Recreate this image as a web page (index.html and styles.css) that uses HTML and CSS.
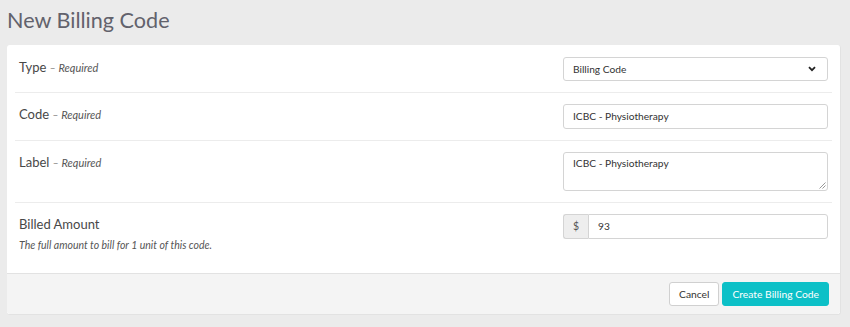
FILE: index.html
```html
<!DOCTYPE html>
<html lang="en">
<head>
    <meta charset="UTF-8">
    <meta name="viewport" content="width=device-width, initial-scale=1.0">
    <title>New Billing Code</title>
    <link rel="stylesheet" href="styles.css">
</head>
<body>

    <h1 class="page-title">New Billing Code</h1>

    <form class="card">
        <div class="card-body">
            <div class="form-row first">
                <div class="field-label">
                    <label>Type</label> <span class="req">&ndash; Required</span>
                </div>
                <div class="field-input">
                    <div class="select">
                        <span>Billing Code</span>
                        <svg class="chevron" width="8" height="6" viewBox="0 0 8 6">
                            <path d="M1 1.2 L4 4.2 L7 1.2" fill="none" stroke="#222" stroke-width="1.8"/>
                        </svg>
                    </div>
                </div>
            </div>

            <div class="form-row">
                <div class="field-label">
                    <label>Code</label> <span class="req">&ndash; Required</span>
                </div>
                <div class="field-input">
                    <div class="text-input">ICBC - Physiotherapy</div>
                </div>
            </div>

            <div class="form-row">
                <div class="field-label">
                    <label>Label</label> <span class="req">&ndash; Required</span>
                </div>
                <div class="field-input">
                    <div class="text-input textarea">
                        ICBC - Physiotherapy
                        <svg class="grip" width="7" height="7" viewBox="0 0 7 7">
                            <path d="M6.5 0.5 L0.5 6.5 M6.5 3.5 L3.5 6.5" stroke="#999" stroke-width="1"/>
                        </svg>
                    </div>
                </div>
            </div>

            <div class="form-row last">
                <div class="field-label">
                    <label>Billed Amount</label>
                    <p class="help">The full amount to bill for 1 unit of this code.</p>
                </div>
                <div class="field-input">
                    <div class="input-group">
                        <span class="addon">$</span>
                        <div class="text-input grouped">93</div>
                    </div>
                </div>
            </div>
        </div>

        <div class="card-footer">
            <button type="button" class="btn btn-default">Cancel</button>
            <button type="button" class="btn btn-primary">Create Billing Code</button>
        </div>
    </form>

</body>
</html>
```

FILE: styles.css
```css
body {
    font-family: Lato, "Open Sans", sans-serif;
    margin: 0;
    padding: 0 9px 0 7px;
    background-color: #ebebeb;
    color: #444;
}

.page-title {
    font-size: 21.6px;
    font-weight: normal;
    color: #62626c;
    margin: 0;
    padding-top: 6px;
    height: 39px;
    line-height: 28px;
}

.card {
    background-color: #fff;
    border-radius: 3px;
    border: 1px solid #e2e2e2;
    border-top: none;
    border-left: none;
}

.card-body {
    padding: 0 8px;
}

.form-row {
    display: flex;
    justify-content: space-between;
    padding: 11px 4px;
    border-bottom: 1px solid #ececec;
}

.form-row.first {
    padding-top: 12px;
}

.form-row.last {
    border-bottom: none;
    padding-bottom: 0;
    height: 59px;
}

.field-label {
    line-height: 18px;
}

.field-label label {
    font-size: 13px;
    color: #484848;
}

.req {
    font-size: 11px;
    font-style: italic;
    color: #555;
    margin-left: -1px;
}

.help {
    margin: 5px 0 0 0;
    font-size: 10.5px;
    line-height: 14px;
    font-style: italic;
    color: #555;
}

.field-input {
    width: 265px;
}

.select, .text-input {
    box-sizing: border-box;
    height: 25px;
    border: 1px solid #d4d4d4;
    border-radius: 3px;
    padding: 0 9px;
    font-size: 10.2px;
    line-height: 23px;
    color: #333;
    background-color: #fff;
}

.select {
    display: flex;
    justify-content: space-between;
    align-items: center;
    height: 24px;
}

.chevron {
    margin-right: 2px;
}

.textarea {
    position: relative;
    height: 39px;
    line-height: 20px;
}

.grip {
    position: absolute;
    right: 1px;
    bottom: 1px;
}

.input-group {
    display: flex;
}

.addon {
    box-sizing: border-box;
    width: 25px;
    height: 25px;
    line-height: 23px;
    text-align: center;
    font-size: 10.5px;
    color: #555;
    background-color: #eee;
    border: 1px solid #d4d4d4;
    border-right: none;
    border-radius: 3px 0 0 3px;
}

.text-input.grouped {
    flex: 1;
    border-radius: 0 3px 3px 0;
}

.card-footer {
    display: flex;
    justify-content: flex-end;
    gap: 3px;
    padding: 8px 11px 8px 0;
    background-color: #f4f4f4;
    border-top: 1px solid #e2e2e2;
    border-radius: 0 0 3px 3px;
}

.btn {
    font-family: inherit;
    font-size: 10.3px;
    height: 24px;
    padding: 0 9px;
    border-radius: 3px;
    cursor: pointer;
}

.btn-default {
    background-color: #fff;
    border: 1px solid #d0d0d0;
    color: #333;
}

.btn-primary {
    background-color: #0cc0c7;
    border: 1px solid #0cc0c7;
    color: #fff;
}
```
